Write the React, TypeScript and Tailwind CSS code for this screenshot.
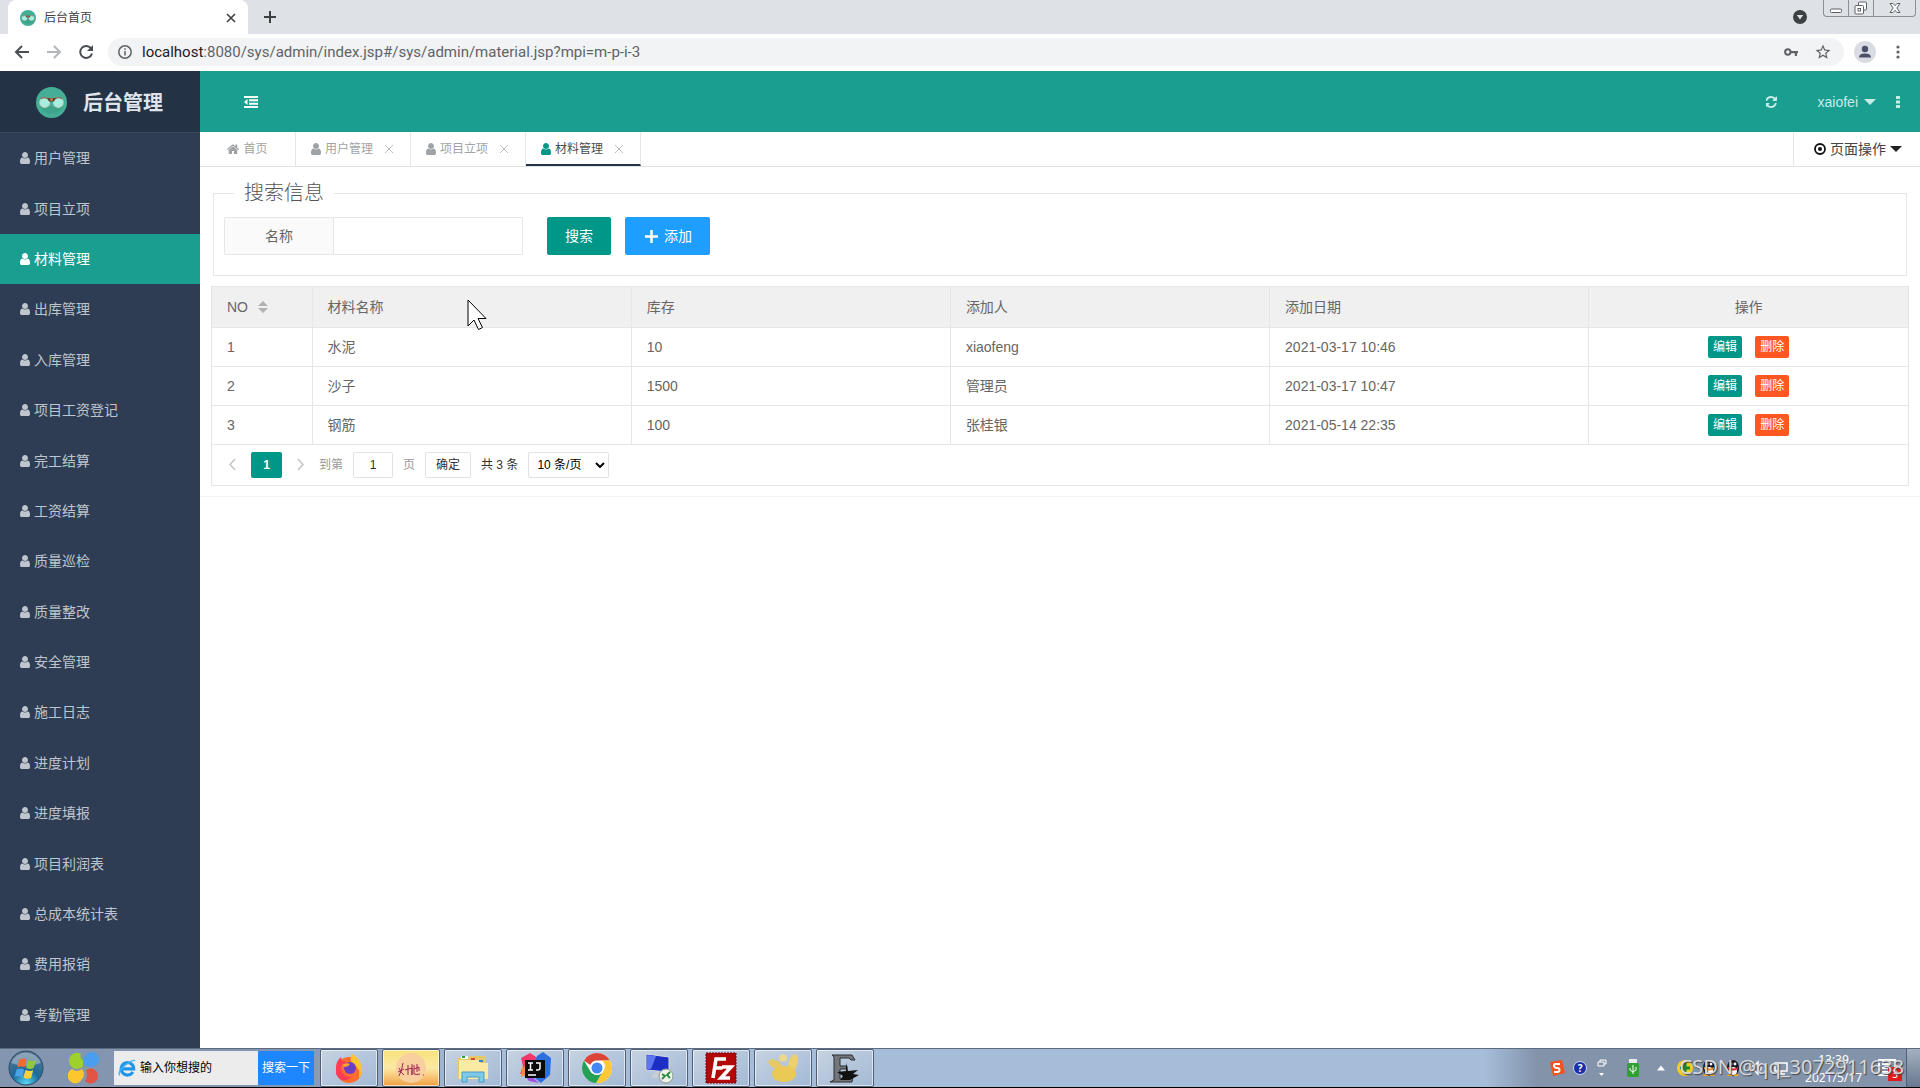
import type { ReactNode } from 'react';

const USER_PATH =
  'M1536 1399q0 109-62.5 187t-150.5 78h-854q-88 0-150.5-78t-62.5-187q0-85 8.5-160.5t31.5-152 58.5-131 94-89 134.5-34.5q131 128 313 128t313-128q76 0 134.5 34.5t94 89 58.5 131 31.5 152 8.5 160.5zm-256-887q0 159-112.5 271.5t-271.5 112.5-271.5-112.5-112.5-271.5 112.5-271.5 271.5-112.5 271.5 112.5 112.5 271.5z';
const HOME_PATH =
  'M1472 992v480q0 26-19 45t-45 19h-384v-384h-256v384h-384q-26 0-45-19t-19-45v-480q0-1 .5-3t.5-3l575-474 575 474q1 2 1 6zm223-69l-62 74q-8 9-21 11h-3q-13 0-21-7l-692-577-692 577q-12 8-24 7-13-2-21-11l-62-74q-8-10-7-23.5t11-21.5l719-599q32-26 76-26t76 26l244 204v-195q0-14 9-23t23-9h192q14 0 23 9t9 23v408l219 182q10 8 11 21.5t-7 23.5z';
const REFRESH_PATH =
  'M1511 1056q0 5-1 7-64 268-268 434.5t-478 166.5q-146 0-282.5-55t-243.5-157l-129 129q-19 19-45 19t-45-19-19-45v-448q0-26 19-45t45-19h448q26 0 45 19t19 45-19 45l-137 137q71 66 161 102t187 36q134 0 250-65t186-179q11-17 53-117 8-23 30-23h192q13 0 22.5 9.5t9.5 22.5zm25-800v448q0 26-19 45t-45 19h-448q-26 0-45-19t-19-45 19-45l138-138q-148-137-349-137-134 0-250 65t-186 179q-11 17-53 117-8 23-30 23h-199q-13 0-22.5-9.5t-9.5-22.5v-7q65-268 270-434.5t480-166.5q146 0 284 55.5t245 156.5l130-129q19-19 45-19t45 19 19 45z';

function UserIcon({ className = '' }: { className?: string }) {
  return (
    <svg viewBox="256 128 1280 1536" className={`h-3 w-2.5 shrink-0 fill-current ${className}`} aria-hidden="true">
      <path d={USER_PATH} />
    </svg>
  );
}

function Logo({ className }: { className: string }) {
  return (
    <svg viewBox="0 0 32 32" className={`shrink-0 ${className}`} aria-hidden="true">
      <circle cx="16" cy="16" r="16" fill="#45ae96" />
      <path d="M4 20h24a13 12 0 0 1-24 0z" fill="#3da38b" />
      <circle cx="9" cy="16" r="5" fill="#a5efe2" stroke="#c7d3c4" strokeWidth="1.200" />
      <circle cx="23" cy="16" r="5" fill="#a5efe2" stroke="#c7d3c4" strokeWidth="1.200" />
      <path d="M5 12q4-2.500 9 1M18 13q5-3.500 9-1" fill="none" stroke="#8a6a54" strokeWidth="1.400" />
      <path d="M11.500 11.500h9l-2 3.500h-5z" fill="#5b3a30" />
      <circle cx="16" cy="13" r="1.500" fill="#d9813c" />
    </svg>
  );
}

function BrowserChrome() {
  return (
    <div className="shrink-0 font-['Open_Sans','Noto_Sans_CJK_SC',sans-serif] text-[#3c4043]">
      <div className="flex h-[34px] bg-[#dee1e6] pl-2">
        <div className="flex w-60 items-center rounded-t-lg bg-white pt-0.5 pr-2 pl-3">
          <Logo className="size-4" />
          <span className="ml-2 flex-1 text-xs">后台首页</span>
          <button type="button" aria-label="关闭标签页" className="p-1">
            <svg viewBox="0 0 10 10" className="size-2.5 stroke-[#3c4043] stroke-[1.6]">
              <path d="M1 1l8 8M9 1l-8 8" />
            </svg>
          </button>
        </div>
        <button type="button" aria-label="新标签页" className="ml-4 self-center">
          <svg viewBox="0 0 12 12" className="size-3 stroke-[#3c4043] stroke-2">
            <path d="M6 0v12M0 6h12" />
          </svg>
        </button>
        <div className="ml-auto flex pr-1">
          <svg viewBox="0 0 14 14" className="mt-2.5 mr-4 size-3.5">
            <circle cx="7" cy="7" r="7" fill="#3c4043" />
            <path d="M3.8 5h6.4L7 9.6z" fill="#dee1e6" />
          </svg>
          <div className="flex h-[17px] rounded-b border border-t-0 border-[#8b8f96]">
            <button type="button" aria-label="最小化" className="flex w-[25px] items-center justify-center border-r border-[#8b8f96]">
              <svg viewBox="0 0 12 12" className="size-3 fill-white stroke-[#5c6068]">
                <rect x="0.5" y="7" width="11" height="3.5" rx="1" />
              </svg>
            </button>
            <button type="button" aria-label="还原" className="flex w-[25px] items-center justify-center border-r border-[#8b8f96]">
              <svg viewBox="0 0 14 14" className="size-3.5 fill-white stroke-[#5c6068]">
                <rect x="4.500" y="1" width="8" height="8" rx="1" />
                <rect x="1" y="4.500" width="8.500" height="8.500" rx="1" />
                <rect x="4" y="7.500" width="2.500" height="2.500" />
              </svg>
            </button>
            <button type="button" aria-label="关闭" className="flex w-[41px] items-center justify-center">
              <svg viewBox="0 0 12 12" className="size-3 fill-white stroke-[#5c6068]">
                <path d="M1 1.500h3l2 2.200 2-2.200h3L7.800 6 11 10.500H8L6 8.300l-2 2.200H1L4.200 6z" />
              </svg>
            </button>
          </div>
        </div>
      </div>
      <div className="flex h-[37px] items-center bg-white pr-5 pb-0.5 pl-3.5">
        <button type="button" aria-label="后退">
          <svg viewBox="0 0 16 16" className="size-4 fill-none stroke-[#4b4f54] stroke-2">
            <path d="M15 8H2M8 2L2 8l6 6" />
          </svg>
        </button>
        <button type="button" aria-label="前进" className="ml-4">
          <svg viewBox="0 0 16 16" className="size-4 fill-none stroke-[#b4b7ba] stroke-2">
            <path d="M1 8h13M8 2l6 6-6 6" />
          </svg>
        </button>
        <button type="button" aria-label="刷新" className="ml-4">
          <svg viewBox="0 0 16 16" className="size-4">
            <path d="M13.200 4.600A6 6 0 1 0 14 9.500" fill="none" stroke="#4b4f54" strokeWidth="2" />
            <path d="M15 1v6H9z" fill="#4b4f54" />
          </svg>
        </button>
        <div className="ml-3.5 flex h-7 flex-1 items-center rounded-full bg-[#f1f3f4] pr-3 pl-2.5">
          <svg viewBox="0 0 14 14" className="size-3.5 shrink-0 fill-none stroke-[#5f6368] stroke-[1.5]">
            <circle cx="7" cy="7" r="6.200" />
            <path d="M7 6v4.500M7 3.300v1.500" />
          </svg>
          <div className="ml-2.5 flex-1 font-['Roboto',sans-serif] text-[15px] leading-5 whitespace-nowrap text-[#5f6368]">
            <span className="text-[#202124]">localhost</span>:8080/sys/admin/index.jsp#/sys/admin/material.jsp?mpi=m-p-i-3
          </div>
          <svg viewBox="0 0 14 8" className="w-3.5">
            <circle cx="3.800" cy="4" r="2.700" fill="none" stroke="#5f6368" strokeWidth="2" />
            <path d="M6.500 3H14v2.200h-1V8h-2.200V5.200H6.500z" fill="#5f6368" />
          </svg>
          <svg viewBox="0 0 24 24" className="ml-4 size-[18px] fill-[#5f6368]">
            <path d="M22 9.240l-7.190-.620L12 2 9.190 8.630 2 9.240l5.460 4.730L5.820 21 12 17.270 18.180 21l-1.630-7.030zM12 15.400l-3.760 2.270 1-4.280-3.320-2.880 4.380-.380L12 6.100l1.710 4.040 4.380.380-3.320 2.880 1 4.280z" />
          </svg>
        </div>
        <svg viewBox="0 0 22 22" className="ml-2.5 size-[22px]">
          <circle cx="11" cy="11" r="11" fill="#dadce4" />
          <circle cx="11" cy="8" r="3.200" fill="#4b5068" />
          <path d="M5 16.500q0-4 6-4t6 4z" fill="#4b5068" />
        </svg>
        <svg viewBox="0 0 4 14" className="ml-5 h-3.5 w-1 fill-[#5f6368]">
          <circle cx="2" cy="2" r="1.600" />
          <circle cx="2" cy="7" r="1.600" />
          <circle cx="2" cy="12" r="1.600" />
        </svg>
      </div>
    </div>
  );
}

const menu = [
  '用户管理', '项目立项', '材料管理', '出库管理', '入库管理', '项目工资登记',
  '完工结算', '工资结算', '质量巡检', '质量整改', '安全管理', '施工日志',
  '进度计划', '进度填报', '项目利润表', '总成本统计表', '费用报销', '考勤管理',
];

function Sidebar() {
  return (
    <aside className="flex w-[200px] shrink-0 flex-col bg-[#2e3d54]">
      <div className="flex h-[62px] shrink-0 items-center border-b border-[#3b4a5f] bg-[#243246] pt-0.5 pl-9">
        <Logo className="size-[31px]" />
        <h1 className="ml-4 text-xl font-bold text-[#dfe3ea]">后台管理</h1>
      </div>
      <nav className="flex flex-1 flex-col pb-2">
        {menu.map((name) => (
          <a
            key={name}
            href="#"
            className={
              name === '材料管理'
                ? 'flex flex-1 items-center gap-1 bg-[#199e90] pl-5 text-white'
                : 'flex flex-1 items-center gap-1 pl-5 text-[#bfc5cd]'
            }
          >
            <UserIcon />
            {name}
          </a>
        ))}
      </nav>
    </aside>
  );
}

function TopBar() {
  return (
    <header className="flex h-[61px] shrink-0 items-center bg-[#199e90] pr-5 pl-11 text-[#c9ebe6]">
      <button type="button" aria-label="收起菜单">
        <svg viewBox="0 0 14 12" className="h-3 w-3.5 fill-white">
          <path d="M0 0h14v2H0zM5 3.300h9v2H5zM5 6.700h9v2H5zM0 10h14v2H0zM3.500 3v6L0 6z" />
        </svg>
      </button>
      <button type="button" aria-label="刷新" className="ml-auto">
        <svg viewBox="128 128 1536 1536" className="size-3 fill-current">
          <path d={REFRESH_PATH} />
        </svg>
      </button>
      <button type="button" className="ml-10 flex items-center gap-1.5">
        xaiofei
        <svg viewBox="0 0 12 6" className="h-1.5 w-3 fill-current">
          <path d="M0 0h12L6 6z" />
        </svg>
      </button>
      <button type="button" aria-label="更多" className="ml-5">
        <svg viewBox="0 0 4 12" className="h-3 w-1 fill-current">
          <path d="M0 0h4v3H0zM0 4.500h4v3H0zM0 9h4v3H0z" />
        </svg>
      </button>
    </header>
  );
}

function TabBar() {
  const tabs = ['用户管理', '项目立项', '材料管理'];
  return (
    <div className="flex h-[35px] shrink-0 border-b border-[#e2e2e2] text-xs text-[#a0a3a6]">
      <a href="#" className="flex w-24 items-center justify-center gap-1 border-r border-[#e6e6e6]">
        <svg viewBox="89 200 1614 1336" className="h-2.5 w-3 fill-current">
          <path d={HOME_PATH} />
        </svg>
        首页
      </a>
      {tabs.map((name) => {
        const active = name === '材料管理';
        return (
          <div
            key={name}
            className={
              active
                ? 'flex w-[115px] items-center border-r border-b-2 border-r-[#e6e6e6] border-b-[#243246] pt-0.5 pl-[15px] text-[#4a4d50]'
                : 'flex w-[115px] items-center border-r border-[#e6e6e6] pl-[15px]'
            }
          >
            <UserIcon className={active ? 'text-[#009688]' : ''} />
            <a href="#" className="ml-1">{name}</a>
            <button type="button" aria-label={`关闭${name}`} className="ml-3">
              <svg viewBox="0 0 8 8" className="size-2 stroke-[#bdbfc1]">
                <path d="M0 0l8 8M8 0L0 8" />
              </svg>
            </button>
          </div>
        );
      })}
      <button type="button" className="ml-auto flex items-center gap-1 border-l border-[#e6e6e6] pr-[18px] pl-5 text-sm text-[#444]">
        <svg viewBox="0 0 12 12" className="size-3">
          <circle cx="6" cy="6" r="5" fill="none" stroke="#111" strokeWidth="1.800" />
          <circle cx="6" cy="6" r="2" fill="#111" />
        </svg>
        页面操作
        <svg viewBox="0 0 12 6" className="h-1.5 w-3 fill-[#222]">
          <path d="M0 0h12L6 6z" />
        </svg>
      </button>
    </div>
  );
}

function SearchPanel() {
  return (
    <fieldset className="mx-[2px] border border-[#e6e6e6] px-2.5 pb-5">
      <legend className="ml-2.5 px-2.5 text-xl leading-[30px] font-light text-[#555]">搜索信息</legend>
      <form className="mt-[9px] flex h-[38px] items-stretch" onSubmit={(e) => e.preventDefault()}>
        <label htmlFor="name" className="flex w-[110px] items-center justify-center rounded-l-xs border border-[#e6e6e6] bg-[#fafafa]">
          名称
        </label>
        <input id="name" type="text" className="w-[189px] rounded-r-xs border border-l-0 border-[#e6e6e6] px-2.5 outline-none" />
        <button type="submit" className="ml-6 rounded-xs bg-[#009688] px-[18px] text-white">搜索</button>
        <button type="button" className="ml-3.5 flex items-center gap-1.5 rounded-xs bg-[#1e9fff] pr-[18px] pl-5 text-white">
          <svg viewBox="0 0 13 13" className="size-[13px] stroke-white stroke-[2.500]">
            <path d="M6.500 0v13M0 6.500h13" />
          </svg>
          添加
        </button>
      </form>
    </fieldset>
  );
}

const rows = [
  ['1', '水泥', '10', 'xiaofeng', '2021-03-17 10:46'],
  ['2', '沙子', '1500', '管理员', '2021-03-17 10:47'],
  ['3', '钢筋', '100', '张桂银', '2021-05-14 22:35'],
];

function MaterialTable() {
  return (
    <div className="mt-2.5 border border-[#e6e6e6]">
      <table className="w-full table-fixed border-collapse text-left">
        <thead className="bg-[#f0f0f0]">
          <tr className="h-10">
            <th className="w-[100px] border-r border-b border-[#e6e6e6] px-[15px] font-normal">
              <span className="flex items-center gap-2.5">
                NO
                <svg viewBox="0 0 10 12" className="h-3 w-2.5 fill-[#b2b2b2]">
                  <path d="M0 5l5-5 5 5zM0 7h10l-5 5z" />
                </svg>
              </span>
            </th>
            {['材料名称', '库存', '添加人', '添加日期'].map((h) => (
              <th key={h} className="border-r border-b border-[#e6e6e6] px-[15px] font-normal">{h}</th>
            ))}
            <th className="border-b border-[#e6e6e6] text-center font-normal">操作</th>
          </tr>
        </thead>
        <tbody>
          {rows.map((row) => (
            <tr key={row[0]} className="h-[39px]">
              {row.map((cell) => (
                <td key={cell} className="border-r border-b border-[#e6e6e6] px-[15px]">{cell}</td>
              ))}
              <td className="border-b border-[#e6e6e6]">
                <div className="flex justify-center gap-[13px] text-xs text-white">
                  <button type="button" className="h-[22px] rounded-xs bg-[#009688] px-[5px]">编辑</button>
                  <button type="button" className="h-[22px] rounded-xs bg-[#ff5722] px-[5px]">删除</button>
                </div>
              </td>
            </tr>
          ))}
        </tbody>
      </table>
      <div className="flex h-10 items-center pl-[15px] text-xs text-[#333]">
        <button type="button" aria-label="上一页" className="px-0.5">
          <svg viewBox="0 0 7 13" className="h-[13px] w-[7px] fill-none stroke-[#c4c4c4] stroke-[1.500]">
            <path d="M6 1L1 6.500 6 12" />
          </svg>
        </button>
        <button type="button" className="ml-[13px] h-[26px] w-[31px] rounded-xs bg-[#009688] font-bold text-white">1</button>
        <button type="button" aria-label="下一页" className="ml-[13px] px-0.5">
          <svg viewBox="0 0 7 13" className="h-[13px] w-[7px] fill-none stroke-[#c4c4c4] stroke-[1.500]">
            <path d="M1 1l5 5.500L1 12" />
          </svg>
        </button>
        <label htmlFor="page" className="ml-[13px] text-[#999]">到第</label>
        <input id="page" type="text" defaultValue="1" className="mx-2.5 h-[26px] w-10 rounded-xs border border-[#e2e2e2] text-center" />
        <span className="text-[#999]">页</span>
        <button type="button" className="ml-2.5 h-[26px] w-[46px] rounded-xs border border-[#e2e2e2]">确定</button>
        <span className="ml-2.5">共 3 条</span>
        <span className="relative ml-2.5">
          <select aria-label="每页条数" className="block h-[26px] w-[81px] appearance-none rounded-xs border border-[#e2e2e2] pl-2 text-black">
            <option>10 条/页</option>
          </select>
          <svg viewBox="0 0 10 6" className="pointer-events-none absolute top-2.5 right-1 h-1.5 w-2.5 fill-none stroke-black stroke-2">
            <path d="M1 1l4 4 4-4" />
          </svg>
        </span>
      </div>
    </div>
  );
}

function Task({ label, className, children }: { label: string; className?: string; children: ReactNode }) {
  return (
    <button
      type="button"
      aria-label={label}
      className={`flex w-[58px] items-center justify-center rounded-xs border border-[#4f6078] shadow-[inset_0_0_0_1px_rgba(255,255,255,0.6)] ${className ?? 'bg-linear-to-br from-[#c6d3e2] to-[#a3b9d4]'}`}
    >
      <svg viewBox="0 0 32 32" className="size-8">{children}</svg>
    </button>
  );
}

function Taskbar() {
  return (
    <footer className="relative flex h-10 shrink-0 border-t border-b border-t-[#5d6b7e] border-b-black bg-linear-to-r from-[#8496af] from-15% via-[#a6bdd9] via-25% to-[#a6bdd9] to-78% font-['Noto_Sans','Noto_Sans_CJK_SC',sans-serif]">
      <button type="button" aria-label="开始" className="ml-2 self-center">
        <svg viewBox="0 0 36 36" className="size-9">
          <defs>
            <radialGradient id="orb" cx="50%" cy="95%" r="90%">
              <stop offset="0" stopColor="#59d7f5" />
              <stop offset="0.450" stopColor="#1c6b9c" />
              <stop offset="1" stopColor="#53728f" />
            </radialGradient>
          </defs>
          <circle cx="18" cy="18" r="17" fill="url(#orb)" stroke="#2c4a66" />
          <path d="M3 13a16 16 0 0 1 30 0q-15 6-30 0z" fill="#fff" opacity="0.350" />
          <path d="M11 10q4-3 7.500-.500l-2 8q-3.500-2-7.500 0z" fill="#ef6a35" />
          <path d="M20 10q4 2 8 0l-2.300 8q-4 2-7.700-.300z" fill="#8fc83e" />
          <path d="M8.600 19.500q4-2 7.500 0l-2 7.500q-3.600-2-7.500 0z" fill="#4aa3e8" />
          <path d="M17.500 20q4 2 7.700.300l-2 7.500q-4 2-7.700-.300z" fill="#fbd13d" />
        </svg>
      </button>
      <svg viewBox="0 0 32 32" className="ml-6 size-8 self-center" aria-hidden="true">
        <path d="M15 14A8 8 0 1 1 13 2q-2 4 2 6z" fill="#9fd12c" />
        <path d="M17 14q-4-6 0-10a7.500 7.500 0 1 1 7 11z" fill="#4b9df0" />
        <path d="M14 17q4 6 0 10A7.500 7.500 0 1 1 4 17q5 4 10 0z" fill="#fdc52e" />
        <path d="M18 18a7.500 7.500 0 1 1-1 11q3-3 1-11z" fill="#e25544" />
      </svg>
      <div className="ml-3.5 flex h-[34px] w-[200px] self-center bg-[#ececec]">
        <svg viewBox="0 0 20 20" className="mx-1 size-[18px] self-center">
          <path d="M5 11H17.500a7 7 0 1 0-1 3.500" fill="none" stroke="#2196e8" strokeWidth="3.400" />
          <path d="M2 18Q-1 14 8 7T19 2" fill="none" stroke="#43b4f2" strokeWidth="1.600" />
        </svg>
        <input type="text" aria-label="搜索" defaultValue="输入你想搜的" className="min-w-0 flex-1 text-xs text-black outline-none" />
        <button type="button" className="w-14 bg-[#1e87ff] text-xs text-white">搜索一下</button>
      </div>
      <div className="ml-1.5 flex gap-1">
        <Task label="Firefox">
          <circle cx="16" cy="18" r="13" fill="#ff6b2c" />
          <path d="M19 2q9 5 10 14a13 13 0 0 1-3 10q2-10-6-14-4-4-1-10z" fill="#ffc42e" />
          <path d="M3 16q0-7 5-11l1 4q3 0 5 2-6 1-6 6 2 9 11 8-10 8-16-3z" fill="#ff3d57" />
          <circle cx="17" cy="16" r="6" fill="#6b3fc4" />
          <path d="M9 13q5-3 8-1-2 3-5 3z" fill="#ffa52c" />
        </Task>
        <Task label="Ink" className="bg-linear-to-b from-[#f7e27a] via-[#fbe9a4] to-[#f0a040]">
          <circle cx="16" cy="16" r="15" fill="#f8cf9e" />
          <path d="M8 11q-1 7-4 13M4 16q2 5 5 7M3 20l6-3M13 13v10M10 18l7-2v7M17 12v11M19 13v9q3 1 6 0M22 12v8M19 17l5-2v4M28 23h1" fill="none" stroke="#9c2450" strokeWidth="1" />
        </Task>
        <Task label="Explorer">
          <path d="M1 6h10l2-2h16v22H1z" fill="#e8c866" />
          <path d="M2 8h20l2 3h7v16H2z" fill="#fbeaa3" />
          <path d="M4 4h7v3H4z" fill="#fff" />
          <path d="M5 4h3v2H5z" fill="#2e9e46" />
          <path d="M14 6h4v2h-4z" fill="#d24a3a" />
          <path d="M22 8h4v2h-4z" fill="#3a7cc9" />
          <path d="M5 20h22v10h-5v-5H10v5H5z" fill="#7cc9e8" stroke="#4a9cc4" />
        </Task>
        <Task label="IntelliJ IDEA">
          <path d="M2 6l9-5 9 6-8 12L1 22l3-8z" fill="#f0386b" />
          <path d="M18 4l6-4 8 6-1 17-9 8-10-8z" fill="#2b6fe0" />
          <path d="M3 20l8 3 9 8-10-2z" fill="#a44fe0" />
          <path d="M3 16l5-3v9l-6 3z" fill="#fc8a3a" />
          <path d="M6 8h20v18H6z" fill="#0a0a0a" />
          <path d="M9 11h5M11.500 11v7M9 18h5M17 11h4v5q0 2-2.500 2H17M9 23h8" fill="none" stroke="#fff" strokeWidth="1.500" />
        </Task>
        <Task label="Chrome">
          <circle cx="16" cy="16" r="15" fill="#fff" />
          <path d="M3 8.500A15 15 0 0 1 29 8.500H16a7.500 7.500 0 0 0-6.800 4.500z" fill="#dc4437" />
          <path d="M29 8.500A15 15 0 0 1 15 31l7-11.500a7.500 7.500 0 0 0-1-11z" fill="#fcc934" />
          <path d="M3 8.500A15 15 0 0 0 15 31l6.500-11a7.500 7.500 0 0 1-12.300-1z" fill="#26a056" />
          <circle cx="16" cy="16" r="7" fill="#fff" />
          <circle cx="16" cy="16" r="5.500" fill="#4587f2" />
        </Task>
        <Task label="Remote Desktop">
          <path d="M3 2l23 3v15L3 18z" fill="#1c2fc4" stroke="#d8dde6" />
          <path d="M4 3l9 1-5 13-4 0z" fill="#5d77f0" />
          <path d="M12 20h7l1 6H8z" fill="#c9ced6" />
          <circle cx="23" cy="24" r="7" fill="#eef2ea" stroke="#8a9a8a" />
          <path d="M19 22l3 2-3 3M27 20l-3 3 3 3" fill="none" stroke="#2a8a3a" strokeWidth="1.800" />
        </Task>
        <Task label="FileZilla">
          <rect x="1" y="1" width="30" height="30" fill="#b30808" stroke="#7c0505" strokeDasharray="2 1" />
          <path d="M8 26L11 7h10M9.500 16h8M17 15h9L16 26h9" fill="none" stroke="#fff" strokeWidth="3.600" />
        </Task>
        <Task label="Navicat">
          <ellipse cx="8" cy="12" rx="7" ry="4" transform="rotate(25 8 12)" fill="#e6c867" />
          <ellipse cx="26" cy="11" rx="4.500" ry="9" transform="rotate(15 26 11)" fill="#ecd070" />
          <ellipse cx="16" cy="6" rx="4" ry="3.500" fill="#eed88c" />
          <ellipse cx="17" cy="22" rx="12" ry="8" fill="#ebc956" />
        </Task>
        <Task label="Editor">
          <path d="M3 3h20l3 5h-4l-2-2H11v8h7v3h-7v10h9l4-3-1 6H1l4-2V5z" fill="#73777c" stroke="#2c2e31" />
          <path d="M8 20l9-1V11l2 8 10-1-5 4 6 1-9 5H11l3-4z" fill="#111" />
        </Task>
      </div>
      <div className="ml-auto flex items-center bg-linear-to-r from-transparent from-0% to-[#8293aa] to-12% pr-6 pl-16 text-xs leading-5 text-white">
        <svg viewBox="0 0 16 16" className="size-4">
          <path d="M1 2l12-2 3 13-12 3z" fill="#f4511e" />
          <path d="M11 4H6.500q-2 0-1.500 2t3 2 2.500 2-2 2H5" fill="none" stroke="#fff" strokeWidth="2" />
        </svg>
        <span className="ml-2 flex size-3.5 items-center justify-center rounded-full border border-[#cdd6f5] bg-[#1d2fa8] text-[10px] font-bold">?</span>
        <svg viewBox="0 0 10 18" className="mx-2.5 h-[18px] w-2.5 fill-none stroke-white">
          <path d="M3 3V1h6v4H7M1 3h6v4H1z" />
          <path d="M2 14h5l-2.500 3z" fill="#fff" stroke="none" />
        </svg>
        <svg viewBox="0 0 12 18" className="ml-2.5 h-[18px] w-3">
          <path d="M2 0h8v5H2z" fill="#e8ecef" />
          <rect y="4" width="12" height="14" rx="2" fill="#2ea22e" />
          <path d="M6 6v9M3 9v2l3 2 3-2V8" fill="none" stroke="#fff" />
        </svg>
        <svg viewBox="0 0 8 5" className="ml-[18px] h-1.5 w-2 fill-white">
          <path d="M4 0l4 5H0z" />
        </svg>
        <svg viewBox="0 0 16 16" className="ml-3 size-4">
          <circle cx="8" cy="8" r="8" fill="#f3cc20" />
          <path d="M8 3v10M3 8h10" stroke="#178a2a" strokeWidth="3" />
        </svg>
        {['#f28a1e', '#d8262c'].map((scarf) => (
          <svg key={scarf} viewBox="0 0 16 16" className="ml-2 size-4">
            <ellipse cx="8" cy="8" rx="6" ry="8" fill="#16181c" />
            <ellipse cx="8" cy="11" rx="4" ry="4" fill="#fff" />
            <circle cx="6" cy="4" r="1.400" fill="#fff" />
            <circle cx="10" cy="4" r="1.400" fill="#fff" />
            <path d="M3 7q5 3 10 0v2q-5 3-10 0z" fill={scarf} />
            <path d="M3 16q2-2 4 0M9 16q2-2 4 0" stroke="#f5a623" strokeWidth="2" />
          </svg>
        ))}
        <svg viewBox="0 0 16 16" className="ml-2 size-4 fill-none stroke-white stroke-[1.500]">
          <path d="M2 6h3l4-4v12l-4-4H2zM11 5q2 3 0 6" />
        </svg>
        <svg viewBox="0 0 16 16" className="ml-2 size-4 fill-none stroke-white stroke-[1.500]">
          <path d="M2 3h12v8H2zM8 11v3M4 14h8" />
        </svg>
        <div className="ml-4 pt-0.5 text-center text-xs leading-[18px]">
          <div>13:39</div>
          <div>2021/5/17</div>
        </div>
        <span className="relative ml-4">
          <svg viewBox="0 0 18 18" className="size-[18px] fill-none stroke-white stroke-2">
            <path d="M1 1h16v15H1zM4 5h10M4 9h10M4 13h6" />
          </svg>
          <span className="absolute top-2 left-2.5 flex size-3.5 items-center justify-center bg-[#e01b1b] text-[10px]">3</span>
        </span>
      </div>
      <div className="pointer-events-none absolute right-4 bottom-1.5 text-xl leading-7 whitespace-nowrap text-[#d8dade] text-shadow-[1px_1px_1px_rgba(60,60,60,0.9)]">
        CSDN @qq_3072911638
      </div>
      <button type="button" aria-label="显示桌面" className="absolute inset-y-0 right-0 w-3.5 border-l border-[#4f5e73] bg-linear-to-b from-[#a5b1c1] to-[#68788e]" />
    </footer>
  );
}

export default function App() {
  return (
    <div className="relative flex h-screen flex-col overflow-hidden bg-white font-['Liberation_Sans','Noto_Sans_CJK_SC',sans-serif] text-sm text-[#666]">
      <BrowserChrome />
      <div className="flex min-h-0 flex-1">
        <Sidebar />
        <div className="flex min-w-0 flex-1 flex-col">
          <TopBar />
          <TabBar />
          <main className="border-b border-[#f3f3f3] px-[11px] pt-[11px] pb-2.5">
            <SearchPanel />
            <MaterialTable />
          </main>
        </div>
      </div>
      <Taskbar />
      <svg viewBox="0 0 20 32" className="pointer-events-none absolute top-[299px] left-[467px] h-8 w-5 fill-white stroke-black" aria-hidden="true">
        <path d="M1 1v26l6-6 4.500 9.500 4-2-4.500-9h8z" />
      </svg>
    </div>
  );
}
